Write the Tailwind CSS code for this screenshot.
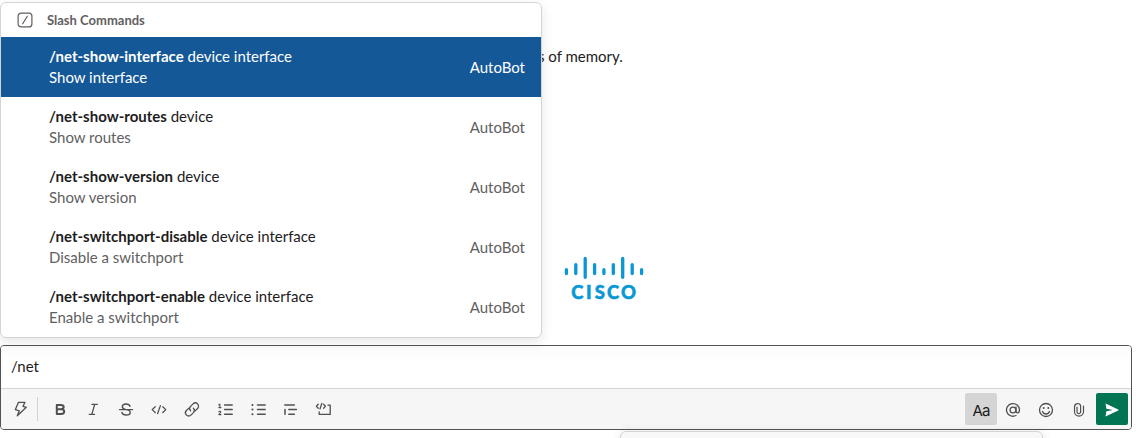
<!DOCTYPE html>
<html lang="en">
<head>
<meta charset="utf-8">
<title>Slash Commands</title>
<script src="https://cdn.jsdelivr.net/npm/@tailwindcss/browser@4"></script>
</head>
<body class="bg-white">
<main class="relative flex h-[438px] w-[1136px] flex-col overflow-hidden bg-white font-['Lato',sans-serif] text-[15px] leading-[21px] text-[#1d1c1d]">
  <section class="flex h-[345px] shrink-0 flex-col pt-[46px]">
    <p class="pl-[538px]">s of memory.</p>
    <svg class="mt-[188px] ml-[560px]" width="90" height="48" viewBox="560 255 90 48">
      <g stroke="#0a97d3" stroke-width="3.3" stroke-linecap="round">
        <path d="M566.4 269.7V273.5M575.8 264.7V273.5M585.2 258.3V277.3M594.6 264.7V273.5M603.9 269.7V273.5M613.3 264.7V273.5M622.7 258.3V277.3M632.2 264.7V273.5M641.6 269.7V273.5"/>
      </g>
      <text x="571.3 586.1 594.8 606.9 621" y="298.6" fill="#0a97d3" stroke="#0a97d3" stroke-width="0.5" font-family="Lato, sans-serif" font-weight="900" font-size="18.5">CISCO</text>
    </svg>
  </section>

  <form class="flex h-[85px] w-[1132px] shrink-0 flex-col overflow-hidden rounded-[4px] border border-[#525153]">
    <div class="h-[42px] shrink-0 bg-linear-to-b from-[#fbfbfb] to-white to-40% pt-[10px] pl-[10px]">/net</div>
    <div class="flex flex-1 items-center border-t border-[#d4d4d4] bg-[#f6f6f6] pr-[3px] text-[#505052]">
      <svg class="ml-[12px]" width="16" height="18" viewBox="0 0 16 18" fill="none" stroke="currentColor" stroke-width="1.3" stroke-linejoin="round"><path d="M5.500 2.300H12L10 6.300L13.300 7.300L4.300 15.700L6.300 10.800L2.400 9.600Z"/></svg>
      <span class="ml-[8px] h-[24px] w-px bg-[#d2d2d2]"></span>
      <svg class="ml-[6px]" width="292" height="32" viewBox="44 393 292 32" fill="none" stroke="currentColor" stroke-width="1.3" stroke-linecap="round" stroke-linejoin="round">
        <path stroke-width="2" d="M56.800 405V414H61.200Q64.200 414 64.200 411.600Q64.200 409.200 61.200 409.200H57H60.700Q63.700 409.200 63.700 407.100Q63.700 405 60.700 405Z"/>
        <path d="M92 404.400H97.300M89.300 414.400H94.500M94.700 404.400L91.800 414.400"/>
        <path stroke-width="1.4" d="M119.500 409.600H132.500M130 406.300Q129.300 404 126 404Q122.300 404 122.300 406.800Q122.300 409 126 409.600Q130.200 410.100 130.200 412.400Q130.200 415 126.200 415Q122.500 415 121.900 412.500"/>
        <path d="M155.200 406.700L152.200 409.600L155.200 412.500M162.800 406.700L165.800 409.600L162.800 412.500M160.400 405.600L157.600 413.600"/>
        <g transform="rotate(-45 192 409.5)"><path d="M190.800 406.300H187.300A3.200 3.200 0 0 0 187.300 412.700H190.800A3.200 3.200 0 0 0 193.900 409.500M193.200 412.700H196.700A3.200 3.200 0 0 0 196.700 406.300H193.200A3.200 3.200 0 0 0 190.100 409.500"/></g>
        <path stroke-width="1.5" d="M224.600 405H232.200M224.600 409.600H232.200M224.600 414.200H232.200M257.500 405H265.200M257.500 409.600H265.200M257.500 414.200H265.200"/>
        <path stroke-width="1.1" d="M218.800 404.800L219.900 404.200V407.600M218.800 407.600H221M218.800 411.600Q220.800 410.700 220.800 412L218.800 414.600H221"/>
        <path stroke-width="2" d="M252.400 405H252.500M252.400 409.600H252.500M252.400 414.200H252.500"/>
        <path stroke-width="1.5" d="M284.800 405H294.400M288.800 409.600H296.400M288.800 414.200H294.400M285 409.500V414.300"/>
        <path d="M318.200 404.200L316.400 406.200L318.200 408.200M323.600 404.200L325.400 406.200L323.600 408.200M321.800 403.400L320 409M328 405.200H330.200V414.400H319.200V411.800"/>
      </svg>
      <div class="ml-auto flex items-center">
        <div class="flex h-[32px] w-[32px] items-center justify-center rounded-[2px] bg-[#d5d5d5] font-['Inter',sans-serif] text-[15px] tracking-[-0.9px] text-[#1d1c1d]"><span class="pt-[2px]">Aa</span></div>
        <svg width="99" height="32" viewBox="997 393 99 32" fill="none" stroke="currentColor" stroke-width="1.3" stroke-linecap="round">
          <circle cx="1013" cy="410" r="2.9"/>
          <path d="M1016 406.900V410.800Q1016 412.900 1017.600 412.900Q1019.500 412.800 1019.500 409.800A6.500 6.300 0 1 0 1016 415.500"/>
          <circle cx="1046" cy="410" r="6.500"/>
          <circle cx="1043.700" cy="408" r="1" fill="currentColor" stroke="none"/>
          <circle cx="1048.300" cy="408" r="1" fill="currentColor" stroke="none"/>
          <path d="M1042.500 411.500Q1043.500 414 1046 414Q1048.500 414 1049.500 411.500"/>
          <path stroke-width="1.2" d="M1077 407V411.800A1.800 1.800 0 0 0 1080.600 411.800V406A2.700 2.700 0 0 0 1077.200 403.600Q1074.500 404.200 1074.500 407V411.600A4.500 4.500 0 0 0 1083.500 411.600V406"/>
        </svg>
        <button class="flex h-[32px] w-[32px] items-center justify-center rounded-[2px] bg-[#007453]" type="button" aria-label="Send">
          <svg class="mt-px" width="16" height="16" viewBox="0 0 16 16" fill="#fff"><path d="M2.100 1.700Q1.500 1.300 1.600 2.100L2.400 6.800L9 8L2.400 9.200L1.600 13.900Q1.500 14.700 2.100 14.300L14.200 8.500Q15 8 14.200 7.500Z"/></svg>
        </button>
      </div>
    </div>
  </form>

  <div class="absolute top-[431px] left-[620px] h-[20px] w-[423px] rounded-[6px] border border-[#d4d4d4] bg-[#f8f8f8] shadow-[0_2px_12px_rgba(0,0,0,0.12)]"></div>

  <div class="absolute top-[2px] left-0 flex h-[336px] w-[542px] flex-col overflow-hidden rounded-[6px] border border-[#d4d4d4] bg-white shadow-[0_4px_12px_rgba(0,0,0,0.1)]">
    <div class="flex h-[34px] shrink-0 items-center text-[13px] font-bold text-[#616061]">
      <svg class="ml-[16px]" width="16" height="16" viewBox="0 0 16 16" fill="none" stroke="currentColor" stroke-width="1.2" stroke-linecap="round"><rect x="1.100" y="1.100" width="13.800" height="13.800" rx="3"/><path d="M10.300 4.300L5.700 11.700"/></svg>
      <span class="ml-[14px]">Slash Commands</span>
    </div>
    <div class="flex h-[60px] shrink-0 items-center justify-between bg-[#145898] pr-4 pl-12 text-white">
      <div><p><b>/net-show-interface</b> device interface</p><p>Show interface</p></div><span>AutoBot</span>
    </div>
    <div class="flex h-[60px] shrink-0 items-center justify-between pr-4 pl-12 text-[#616061]">
      <div><p class="text-[#1d1c1d]"><b>/net-show-routes</b> device</p><p>Show routes</p></div><span>AutoBot</span>
    </div>
    <div class="flex h-[60px] shrink-0 items-center justify-between pr-4 pl-12 text-[#616061]">
      <div><p class="text-[#1d1c1d]"><b>/net-show-version</b> device</p><p>Show version</p></div><span>AutoBot</span>
    </div>
    <div class="flex h-[60px] shrink-0 items-center justify-between pr-4 pl-12 text-[#616061]">
      <div><p class="text-[#1d1c1d]"><b>/net-switchport-disable</b> device interface</p><p>Disable a switchport</p></div><span>AutoBot</span>
    </div>
    <div class="flex h-[60px] shrink-0 items-center justify-between pr-4 pl-12 text-[#616061]">
      <div><p class="text-[#1d1c1d]"><b>/net-switchport-enable</b> device interface</p><p>Enable a switchport</p></div><span>AutoBot</span>
    </div>
  </div>
</main>
</body>
</html>
